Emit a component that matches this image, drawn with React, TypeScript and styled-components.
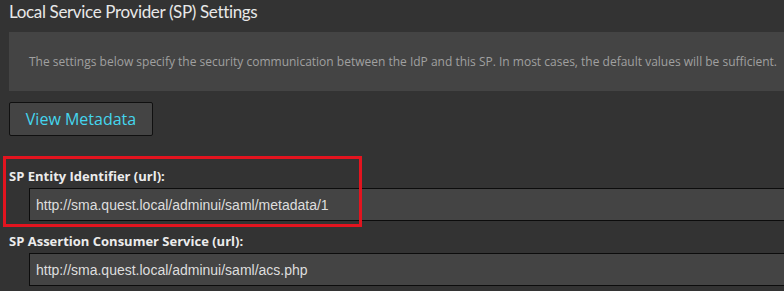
import styled, { createGlobalStyle } from "styled-components";

const GlobalStyle = createGlobalStyle`
  html, body {
    margin: 0;
    padding: 0;
    background-color: #333333;
    overflow: hidden;
  }
  body {
    font-family: "Open Sans", "Liberation Sans", sans-serif;
  }
`;

const Page = styled.div`
  width: 784px;
  height: 291px;
  padding-left: 9px;
  box-sizing: border-box;
  overflow: hidden;
`;
const Title = styled.h2`
  margin: 0;
  height: 32px;
  font-family: Lato, "Open Sans", sans-serif;
  font-size: 17px;
  font-weight: 400;
  letter-spacing: -0.35px;
  line-height: 24px;
  color: #e8e8e8;
  white-space: nowrap;
`;
const InfoBox = styled.div`
  height: 59px;
  margin-right: -20px;
  padding-left: 20px;
  display: flex;
  align-items: center;
  background-color: #444444;
  font-size: 12px;
  color: #a0a0a0;
  white-space: nowrap;
`;
const Button = styled.button`
  margin-top: 11px;
  width: 144px;
  height: 34px;
  display: flex;
  align-items: center;
  justify-content: center;
  background-color: #444444;
  border: 1px solid #101010;
  border-radius: 2px;
  font-family: "Open Sans", sans-serif;
  font-size: 16px;
  color: #45d6ee;
  padding: 0;
`;
const Fields = styled.div`
  margin-top: 31px;
  display: flex;
  flex-direction: column;
  gap: 11px;
`;
const Field = styled.div`
  position: relative;
  display: flex;
  flex-direction: column;
  gap: 3px;
`;
const Highlight = styled.div`
  position: absolute;
  left: -6px;
  top: -11px;
  width: 359px;
  height: 71px;
  box-sizing: border-box;
  border: 3px solid #e3141f;
  pointer-events: none;
`;
const Label = styled.label`
  font-size: 13px;
  font-weight: 700;
  line-height: 18px;
  color: #ececec;
`;
const Input = styled.div`
  margin-left: 20px;
  margin-right: -20px;
  height: 31px;
  padding-left: 6px;
  display: flex;
  align-items: center;
  background-color: #444444;
  border: 1px solid #0c0c0c;
  font-family: "Liberation Sans", Arial, sans-serif;
  font-size: 14px;
  color: #dedede;
  white-space: nowrap;
`;

const fields = [
  { label: "SP Entity Identifier (url):", value: "http://sma.quest.local/adminui/saml/metadata/1", highlight: true },
  { label: "SP Assertion Consumer Service (url):", value: "http://sma.quest.local/adminui/saml/acs.php" },
];

const App = () => {
  return (
    <>
      <GlobalStyle />
      <Page>
        <Title>Local Service Provider (SP) Settings</Title>
        <InfoBox>
          The settings below specify the security communication between the IdP and this SP. In most cases, the default
          values will be sufficient.
        </InfoBox>
        <Button>View Metadata</Button>
        <Fields>
          {fields.map((f) => (
            <Field key={f.label}>
              {f.highlight && <Highlight />}
              <Label>{f.label}</Label>
              <Input>{f.value}</Input>
            </Field>
          ))}
        </Fields>
      </Page>
    </>
  );
};

export default App;
